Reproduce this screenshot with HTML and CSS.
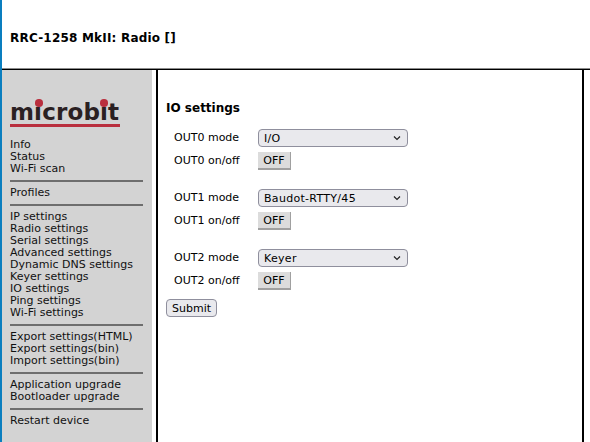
FILE: index.html
```html
<!DOCTYPE html>
<html lang="en">
<head>
    <meta charset="UTF-8">
    <meta name="viewport" content="width=device-width, initial-scale=1.0">
    <title>RRC-1258 MkII: Radio []</title>
    <link rel="stylesheet" href="styles.css">
</head>
<body>
    <div class="header">
        <h1>RRC-1258 MkII: Radio []</h1>
    </div>
    <div class="main">
        <div class="sidebar">
            <div class="logo">
                <span class="logo-text">microbit</span>
                <span class="logo-dot dot-one"></span>
                <span class="logo-dot dot-two"></span>
            </div>
            <a href="#">Info</a>
            <a href="#">Status</a>
            <a href="#">Wi-Fi scan</a>
            <hr>
            <a href="#">Profiles</a>
            <hr>
            <a href="#">IP settings</a>
            <a href="#">Radio settings</a>
            <a href="#">Serial settings</a>
            <a href="#">Advanced settings</a>
            <a href="#">Dynamic DNS settings</a>
            <a href="#">Keyer settings</a>
            <a href="#">IO settings</a>
            <a href="#">Ping settings</a>
            <a href="#">Wi-Fi settings</a>
            <hr>
            <a href="#">Export settings(HTML)</a>
            <a href="#">Export settings(bin)</a>
            <a href="#">Import settings(bin)</a>
            <hr>
            <a href="#">Application upgrade</a>
            <a href="#">Bootloader upgrade</a>
            <hr>
            <a href="#">Restart device</a>
        </div>
        <div class="content">
            <h2>IO settings</h2>
            <form>
                <div class="group">
                    <div class="row">
                        <label>OUT0 mode</label>
                        <select><option>I/O</option></select>
                    </div>
                    <div class="row">
                        <label>OUT0 on/off</label>
                        <button type="button" class="toggle">OFF</button>
                    </div>
                </div>
                <div class="group">
                    <div class="row">
                        <label>OUT1 mode</label>
                        <select><option>Baudot-RTTY/45</option></select>
                    </div>
                    <div class="row">
                        <label>OUT1 on/off</label>
                        <button type="button" class="toggle">OFF</button>
                    </div>
                </div>
                <div class="group last">
                    <div class="row">
                        <label>OUT2 mode</label>
                        <select><option>Keyer</option></select>
                    </div>
                    <div class="row">
                        <label>OUT2 on/off</label>
                        <button type="button" class="toggle">OFF</button>
                    </div>
                </div>
                <button type="submit" class="submit">Submit</button>
            </form>
        </div>
    </div>
</body>
</html>
```

FILE: styles.css
```css
html, body {
    height: 100%;
}
body {
    margin: 0;
    display: flex;
    flex-direction: column;
    overflow: hidden;
    background-color: #ffffff;
    border-left: 2px solid #0a7ebf;
    box-sizing: border-box;
    color: #000000;
    font-family: "DejaVu Sans", Verdana, sans-serif;
    font-size: 11px;
    line-height: 12px;
}

/* top bar */
.header {
    height: 69px;
    flex: none;
    display: flex;
    align-items: center;
    padding: 7px 0 0 8px;
    box-sizing: border-box;
    border-bottom: 1px solid #8c8c8c;
}
h1 {
    margin: 0;
    font-size: 12px;
    line-height: 14px;
    font-weight: bold;
    letter-spacing: 0.2px;
}

.main {
    flex: 1;
    display: flex;
    min-height: 0;
    border-top: 1px solid #000000;
}

/* left menu */
.sidebar {
    width: 154px;
    flex: none;
    box-sizing: border-box;
    padding: 0 9px 0 8px;
    background-color: #d3d3d3;
    border-right: 4px solid #ffffff;
}
.sidebar a {
    display: block;
    color: #111111;
    text-decoration: none;
    white-space: nowrap;
    height: 12px;
}
.sidebar hr {
    margin: 5px 0 5px 0;
    height: 2px;
    border: 0;
    background-color: #6e6e6e;
}

.logo {
    position: relative;
    height: 28px;
    margin: 26px 0 12px 0;
    width: 110px;
    border-bottom: 3px solid #b92f3e;
}
.logo-text {
    display: block;
    height: 28px;
    font-size: 23px;
    line-height: 32px;
    font-weight: bold;
    color: #2a2022;
    letter-spacing: 0.15px;
}
.logo-dot {
    position: absolute;
    top: 3px;
    width: 7.5px;
    height: 7.5px;
    border-radius: 50%;
    background-color: #b92f3e;
}
.dot-one {
    left: 25px;
}
.dot-two {
    left: 90px;
}

/* form area */
.content {
    flex: none;
    width: 428px;
    box-sizing: border-box;
    padding: 0 8px;
    border-left: 2px solid #000000;
    border-right: 2px solid #000000;
}
h2 {
    margin: 31px 0 14px 0;
    font-size: 12px;
    line-height: 14px;
    font-weight: bold;
}
.group {
    margin-bottom: 19px;
}
.group.last {
    margin-bottom: 9px;
}
.row {
    display: flex;
    align-items: center;
    height: 18px;
    margin-bottom: 5px;
    padding-left: 8px;
}
.row:last-child {
    margin-bottom: 0;
}
.row label {
    width: 84px;
    flex: none;
}
select {
    appearance: none;
    width: 150px;
    height: 18px;
    padding: 0 0 0 5px;
    font-family: inherit;
    font-size: 11px;
    letter-spacing: 0.3px;
    color: #000000;
    background-color: #e9e9ed;
    background-image: url("data:image/svg+xml,%3Csvg xmlns='http://www.w3.org/2000/svg' width='8' height='6'%3E%3Cpath d='M1 1.5l3 3 3-3' fill='none' stroke='%23222' stroke-width='1.2'/%3E%3C/svg%3E");
    background-repeat: no-repeat;
    background-position: right 6px center;
    border: 1px solid #8f8f9d;
    border-radius: 4px;
}
.toggle {
    width: 33px;
    height: 18px;
    padding: 0;
    font-family: inherit;
    font-size: 11px;
    color: #000000;
    background-color: #dcdcdc;
    border: 0;
    border-right: 1px solid #a0a0a0;
    border-bottom: 2px solid #a0a0a0;
}
.submit {
    display: block;
    width: 51px;
    height: 18px;
    padding: 0;
    font-family: inherit;
    font-size: 11px;
    color: #000000;
    background-color: #e9e9ed;
    border: 1px solid #8f8f9d;
    border-radius: 4px;
}
```
